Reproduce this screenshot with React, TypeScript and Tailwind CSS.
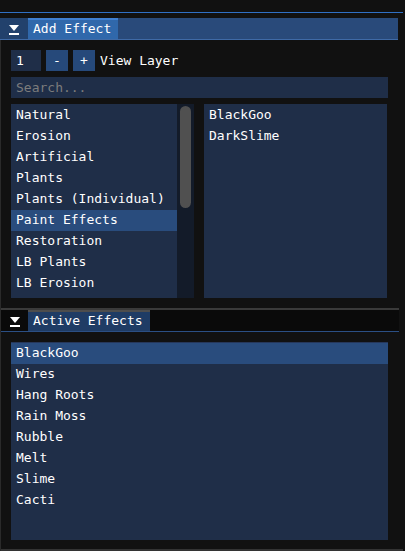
import React from "react";

const categories = [
  "Natural",
  "Erosion",
  "Artificial",
  "Plants",
  "Plants (Individual)",
  "Paint Effects",
  "Restoration",
  "LB Plants",
  "LB Erosion",
  "LB Artificial",
  "Custom",
];

const effects = ["BlackGoo", "DarkSlime"];

const active = ["BlackGoo", "Wires", "Hang Roots", "Rain Moss", "Rubble", "Melt", "Slime", "Cacti"];

function MenuIcon() {
  return (
    <svg width="10" height="10" viewBox="0 0 10 10" className="block">
      <polygon points="0,0 10,0 5,6" fill="#ffffff" />
      <rect x="0" y="8" width="10" height="2" fill="#ffffff" />
    </svg>
  );
}

function Row({ label, selected }: { label: string; selected?: boolean }) {
  return (
    <div
      className={`h-[21px] leading-[20px] pl-[5px] whitespace-nowrap ${
        selected ? "bg-[#294c7d]" : ""
      }`}
    >
      {label}
    </div>
  );
}

export default function App() {
  return (
    <div className="w-[405px] h-[551px] bg-[#111111] font-['DejaVu_Sans_Mono',monospace] text-[13px] text-white flex flex-col overflow-hidden">
      <div className="h-[12px] shrink-0" />
      <div className="h-px w-[403px] bg-[#3070c4] shrink-0" />

      {/* Add Effect window */}
      <div className="w-[403px] flex flex-col shrink-0">
        <div className="h-[5px]" />
        <div className="w-[398px] h-[22px] flex bg-[#294a7a] border-b border-[#3f6aa6]">
          <div className="w-[28px] h-full bg-[#22416c] flex items-center justify-center pt-[2px]">
            <MenuIcon />
          </div>
          <div className="w-[90px] h-full bg-[#3068ab] border-t-2 border-[#3f7fd0] pl-[5px] leading-[18px] whitespace-nowrap">
            Add Effect
          </div>
        </div>

        <div className="pl-[10px] pt-[10px] flex flex-col gap-[6px] border-l border-[#2a2a2a]">
          <div className="flex items-center gap-[5px] h-[21px]">
            <div className="w-[30px] h-[21px] bg-[#1f2e48] pl-[5px] leading-[21px]">1</div>
            <div className="w-[22px] h-[21px] bg-[#26497a] leading-[21px] text-center">-</div>
            <div className="w-[22px] h-[21px] bg-[#26497a] leading-[21px] text-center">+</div>
            <span className="leading-[21px]">View Layer</span>
          </div>

          <div className="w-[377px] h-[21px] bg-[#1f2e48] pl-[5px] leading-[21px] text-[#7c7c7c]">
            Search...
          </div>

          <div className="flex gap-[10px] h-[194px]">
            <div className="w-[183px] h-full bg-[#1f2e48] flex overflow-hidden">
              <div className="flex-1 pt-px overflow-hidden">
                {categories.map((c) => (
                  <Row key={c} label={c} selected={c === "Paint Effects"} />
                ))}
              </div>
              <div className="w-[17px] h-full bg-[#131b29] pt-[2px] pl-[3px]">
                <div className="w-[11px] h-[102px] rounded-full bg-[#505050]" />
              </div>
            </div>
            <div className="w-[183px] h-full bg-[#1f2e48] pt-px">
              {effects.map((e) => (
                <Row key={e} label={e} />
              ))}
            </div>
          </div>
          <div className="h-[4px]" />
        </div>
      </div>

      {/* Active Effects window */}
      <div className="w-[403px] flex-1 flex flex-col border-l border-[#2a2a2a]">
        <div className="h-[2px] w-[398px] bg-[#3a3a3a]" />
        <div className="w-[398px] h-[22px] flex bg-[#0a0a0a] border-b border-[#2b4f84]">
          <div className="w-[27px] h-full flex items-center justify-center pt-[2px]">
            <MenuIcon />
          </div>
          <div className="w-[122px] h-full bg-[#1f3c65] border-t-2 border-[#4d4d4d] pl-[5px] leading-[18px] whitespace-nowrap">
            Active Effects
          </div>
        </div>

        <div className="pl-[10px] pt-[10px]">
          <div className="w-[377px] h-[198px] bg-[#1f2e48] border-t border-[#26375a]">
            {active.map((a) => (
              <Row key={a} label={a} selected={a === "BlackGoo"} />
            ))}
          </div>
        </div>
        <div className="flex-1" />
        <div className="h-[2px] bg-[#333333]" />
      </div>
    </div>
  );
}
